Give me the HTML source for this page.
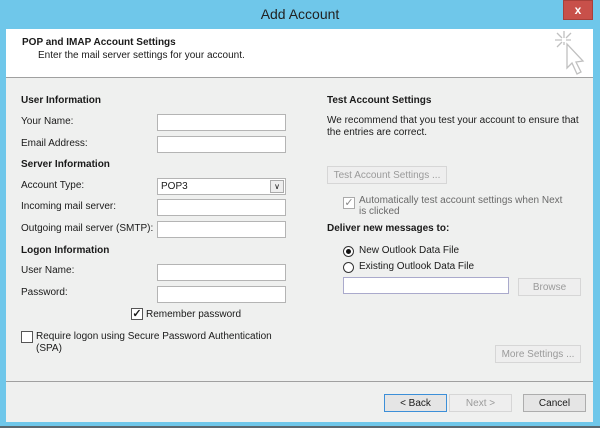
<!DOCTYPE html>
<html><head><style>
*{margin:0;padding:0;box-sizing:border-box}
body{width:600px;height:428px;background:#6fc7ea;font-family:"Liberation Sans",sans-serif;font-size:10px;color:#1a1a1a;position:relative;overflow:hidden}
.a{position:absolute;white-space:nowrap}
.b{font-weight:bold}
.in{position:absolute;background:#fff;border:1px solid #b4b4b4;height:17px}
.btn{position:absolute;border:1px solid #adadad;background:#e5e5e5;height:18px;text-align:center;line-height:17px}
.dis{border-color:#d6d6d6;background:#eeeeee;color:#9a9a9a}
</style></head><body>
<div class="a" style="left:0;top:0;width:600px;text-align:center;top:6px;font-size:14px;color:#222">Add Account</div>
<div class="a" style="left:563px;top:0;width:30px;height:20px;background:#c8504a;border:1px solid #a8403a;color:#fff;font-weight:bold;font-size:12px;text-align:center;line-height:18px">x</div>
<div class="a" style="left:6px;top:29px;width:587px;height:393px;background:#eff0ef"></div>
<div class="a" style="left:6px;top:29px;width:587px;height:49px;background:#fff;border-bottom:1px solid #a0a0a0"></div>
<div class="a" style="left:6px;top:381px;width:587px;height:1px;background:#a0a0a0"></div>
<div class="a" style="left:0;top:426px;width:600px;height:2px;background:#5a6870"></div>
<svg class="a" style="left:553px;top:30px" width="36" height="48"><g stroke="#c0c0c0" stroke-width="1.3" fill="none"><path d="M11 1v7M11 12v3M2 10h7M13 10h5M4 3l5 5M18 3l-5 5M4 17l5-5"/><path d="M14 14v24l5-5 5 11 4-2-5-10 7-1z" fill="#fff"/></g></svg>
<div class="a b" style="left:22px;top:37px">POP and IMAP Account Settings</div>
<div class="a" style="left:38px;top:50px">Enter the mail server settings for your account.</div>

<div class="a b" style="left:21px;top:95px">User Information</div>
<div class="a" style="left:21px;top:116px">Your Name:</div>
<div class="a" style="left:21px;top:138px">Email Address:</div>
<div class="a b" style="left:21px;top:159px">Server Information</div>
<div class="a" style="left:21px;top:180px">Account Type:</div>
<div class="a" style="left:21px;top:201px">Incoming mail server:</div>
<div class="a" style="left:21px;top:223px">Outgoing mail server (SMTP):</div>
<div class="a b" style="left:21px;top:245px">Logon Information</div>
<div class="a" style="left:21px;top:265px">User Name:</div>
<div class="a" style="left:21px;top:287px">Password:</div>
<div class="in" style="left:157px;top:114px;width:129px"></div>
<div class="in" style="left:157px;top:136px;width:129px"></div>
<div class="in" style="left:157px;top:178px;width:129px;padding-left:3px;line-height:15px">POP3<div class="a" style="right:1px;top:1px;width:14px;height:13px;border:1px solid #aaa;background:#eee;font-size:8px;text-align:center;line-height:11px">&#8744;</div></div>
<div class="in" style="left:157px;top:199px;width:129px"></div>
<div class="in" style="left:157px;top:221px;width:129px"></div>
<div class="in" style="left:157px;top:264px;width:129px"></div>
<div class="in" style="left:157px;top:286px;width:129px"></div>
<div class="in" style="left:131px;top:308px;width:12px;height:12px;border-color:#555;font-size:11px;line-height:10px;text-align:center;font-weight:bold">&#10003;</div>
<div class="a" style="left:146px;top:309px">Remember password</div>
<div class="in" style="left:21px;top:331px;width:12px;height:12px;border-color:#555"></div>
<div class="a" style="left:36px;top:331px">Require logon using Secure Password Authentication</div>
<div class="a" style="left:36px;top:343px">(SPA)</div>

<div class="a b" style="left:327px;top:95px">Test Account Settings</div>
<div class="a" style="left:327px;top:115px">We recommend that you test your account to ensure that</div>
<div class="a" style="left:327px;top:127px">the entries are correct.</div>
<div class="btn dis" style="left:327px;top:166px;width:120px">Test Account Settings ...</div>
<div class="in" style="left:343px;top:197px;width:12px;height:12px;border-color:#aaa;color:#888;font-size:11px;line-height:10px;text-align:center">&#10003;</div>
<div class="a" style="left:359px;top:195px;color:#6a6a6a">Automatically test account settings when Next</div>
<div class="a" style="left:359px;top:206px;color:#6a6a6a">is clicked</div>
<div class="a b" style="left:327px;top:223px">Deliver new messages to:</div>
<div class="a" style="left:343px;top:246px;width:11px;height:11px;border:1px solid #333;border-radius:50%;background:#fff"><div class="a" style="left:2px;top:2px;width:5px;height:5px;border-radius:50%;background:#111"></div></div>
<div class="a" style="left:359px;top:245px">New Outlook Data File</div>
<div class="a" style="left:343px;top:262px;width:11px;height:11px;border:1px solid #333;border-radius:50%;background:#fff"></div>
<div class="a" style="left:359px;top:261px">Existing Outlook Data File</div>
<div class="in" style="left:343px;top:277px;width:166px;border-color:#aac"></div>
<div class="btn dis" style="left:518px;top:278px;width:63px">Browse</div>
<div class="btn dis" style="left:495px;top:345px;width:86px">More Settings ...</div>

<div class="btn" style="left:384px;top:394px;width:63px;border-color:#3c8fd8">&lt; Back</div>
<div class="btn dis" style="left:449px;top:394px;width:63px">Next &gt;</div>
<div class="btn" style="left:523px;top:394px;width:63px">Cancel</div>
</body></html>
